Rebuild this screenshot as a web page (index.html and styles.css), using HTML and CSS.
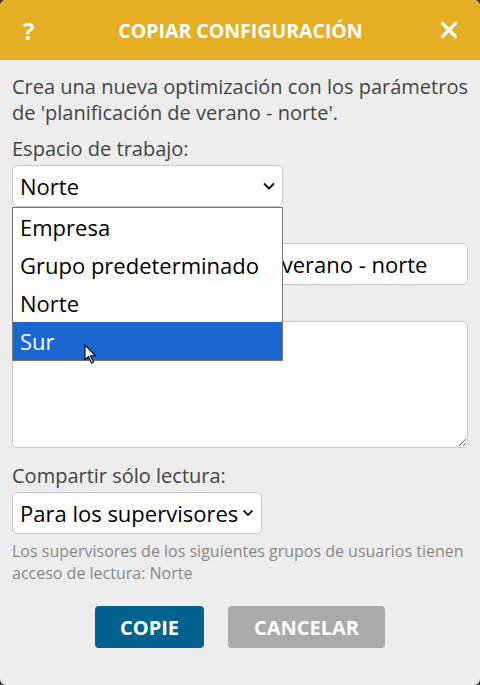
FILE: index.html
```html
<!DOCTYPE html>
<html lang="es">
<head>
<meta charset="utf-8">
<link rel="stylesheet" href="styles.css">
</head>
<body>
<div class="dialog">
  <div class="header">
    <span class="help">?</span>
    <span class="title">COPIAR CONFIGURACIÓN</span>
    <svg class="close" width="18" height="18" viewBox="0 0 18 18"><path d="M2.5 2.5 L15.5 15.5 M15.5 2.5 L2.5 15.5" stroke="#fff" stroke-width="3.2" stroke-linecap="round"/></svg>
  </div>
  <div class="content">
    <p class="intro">Crea una nueva optimización con los parámetros de 'planificación de verano - norte'.</p>

    <div class="field first">
      <label class="label">Espacio de trabajo:</label>
      <div class="select ws">
        <span>Norte</span>
        <svg width="14" height="10" viewBox="0 0 14 10"><path d="M2 2.5 L7 7.5 L12 2.5" fill="none" stroke="#111" stroke-width="2"/></svg>
      </div>
      <ul class="menu">
        <li>Empresa</li>
        <li>Grupo predeterminado</li>
        <li>Norte</li>
        <li class="active">Sur</li>
      </ul>
      <svg class="cursor" width="14" height="22" viewBox="0 0 14 22"><path d="M1 1 L1 16 L4.5 12.5 L7.5 19 L9.5 18 L6.5 11.8 L11.5 11.8 Z" fill="#fff" stroke="#000" stroke-width="1.1" stroke-linejoin="round"/></svg>
    </div>

    <div class="field">
      <label class="label covered">Nombre:</label>
      <div class="input"><span class="covered">Copia de planificación de&nbsp;</span>verano - norte</div>
    </div>

    <div class="field">
      <label class="label covered">Descripción:</label>
      <textarea class="textarea"></textarea>
    </div>

    <div class="field share">
      <label class="label">Compartir sólo lectura:</label>
      <div class="select sh">
        <span>Para los supervisores</span>
        <svg width="12" height="10" viewBox="0 0 12 10"><path d="M1.5 2.5 L6 7 L10.5 2.5" fill="none" stroke="#111" stroke-width="1.8"/></svg>
      </div>
      <p class="hint">Los supervisores de los siguientes grupos de usuarios tienen acceso de lectura: Norte</p>
    </div>

    <div class="buttons">
      <button class="btn primary">COPIE</button>
      <button class="btn secondary">CANCELAR</button>
    </div>
  </div>
</div>
</body>
</html>
```

FILE: styles.css
```css
* { box-sizing: border-box; }
html, body { margin: 0; padding: 0; }
body {
  background: #333;
  font-family: "Open Sans", "Noto Sans", sans-serif;
}
.dialog {
  width: 480px;
  height: 685px;
  background: #ededed;
  border-radius: 6px;
  overflow: hidden;
}
.header {
  height: 60px;
  background: #e6ae22;
  display: flex;
  align-items: center;
  justify-content: space-between;
  padding: 0 22px 0 23px;
  color: #fff;
}
.help {
  font-weight: 700;
  font-size: 24px;
  width: 18px;
}
.title {
  font-weight: 700;
  font-size: 19.5px;
}
.close { display: block; }
.content {
  position: relative;
  padding: 14px 12px 0 12px;
}
.intro {
  margin: 0;
  font-size: 20px;
  line-height: 26px;
  color: #444;
}
.field {
  position: relative;
  display: flex;
  flex-direction: column;
  margin-top: 7px;
}
.field.first { margin-top: 10px; }
.label {
  font-size: 20px;
  line-height: 26px;
  color: #444;
  margin-bottom: 3px;
}
.covered { visibility: hidden; }
.select {
  height: 42px;
  background: #fff;
  border: 1px solid #c8c8c8;
  border-radius: 5px;
  display: flex;
  align-items: center;
  justify-content: space-between;
  padding: 0 6px 0 7px;
  font-size: 22px;
  color: #000;
}
.select.ws { width: 271px; }
.select.sh { width: 250px; padding-right: 7px; }
.select svg { display: block; }
.menu {
  position: absolute;
  top: 71px;
  left: 0;
  width: 271px;
  margin: 0;
  padding: 0;
  list-style: none;
  background: #fff;
  border: 1px solid #767676;
  z-index: 5;
}
.menu li {
  height: 38px;
  line-height: 38px;
  padding-left: 7px;
  font-size: 22px;
  color: #000;
}
.menu li.active {
  background: #1a67d2;
  color: #fff;
}
.cursor {
  position: absolute;
  left: 72px;
  top: 208px;
  z-index: 6;
}
.input {
  height: 42px;
  background: #fff;
  border: 1px solid #c8c8c8;
  border-radius: 5px;
  display: flex;
  align-items: center;
  padding: 0 7px;
  font-size: 22px;
  color: #000;
  white-space: nowrap;
  overflow: hidden;
}
.textarea {
  display: block;
  height: 127px;
  width: 100%;
  background: #fff;
  border: 1px solid #c8c8c8;
  border-radius: 5px;
  resize: vertical;
  font-family: inherit;
}
.share { margin-top: 15px; }
.hint {
  margin: 6px 0 0 0;
  font-size: 16px;
  line-height: 22px;
  color: #888;
}
.buttons {
  display: flex;
  justify-content: center;
  gap: 24px;
  margin-top: 22px;
}
.btn {
  height: 42px;
  border: none;
  border-radius: 4px;
  color: #fff;
  font-family: inherit;
  font-weight: 700;
  font-size: 20px;
  padding: 0;
}
.primary { background: #00628f; width: 109px; }
.secondary { background: #aaaaaa; width: 157px; }
```
